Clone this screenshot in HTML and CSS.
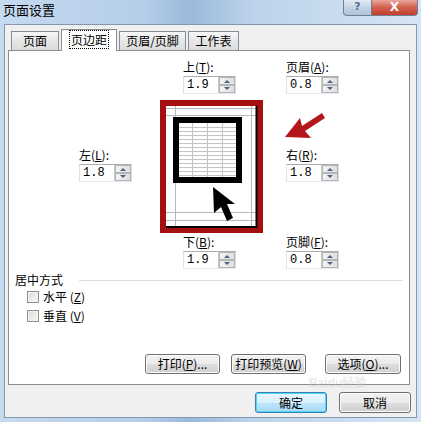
FILE: index.html
```
<!DOCTYPE html>
<html lang="zh-CN">
<head>
  <meta charset="UTF-8">
  <title>页面设置</title>
  <link rel="stylesheet" href="styles.css">
</head>
<body>
  <div class="window">
    <div class="titlebar">
      <span class="title">页面设置</span>
      <div class="caption-buttons">
        <span class="cap-help">?</span>
        <span class="cap-close">X</span>
      </div>
    </div>

    <div class="dialog">
      <div class="tabs">
        <div class="tab tab-page">页面</div>
        <div class="tab tab-margin active"><span class="focus">页边距</span></div>
        <div class="tab tab-header">页眉/页脚</div>
        <div class="tab tab-sheet">工作表</div>
      </div>

      <div class="panel">
        <div class="margins">
          <div></div>
          <div class="field indent">
            <label>上(<u>T</u>):</label>
            <div class="spin"><span class="value">1.9</span><span class="arrows"><i class="up"></i><i class="down"></i></span></div>
          </div>
          <div class="field indent">
            <label>页眉(<u>A</u>):</label>
            <div class="spin"><span class="value">0.8</span><span class="arrows"><i class="up"></i><i class="down"></i></span></div>
          </div>

          <div class="field middle">
            <label>左(<u>L</u>):</label>
            <div class="spin"><span class="value">1.8</span><span class="arrows"><i class="up"></i><i class="down"></i></span></div>
          </div>
          <svg class="preview" width="103" height="133" viewBox="0 0 103 133">
            <rect x="3" y="3" width="97" height="127" fill="#fff" stroke="#a3100f" stroke-width="6"/>
            <g stroke="#b9b9b9" stroke-width="1">
              <line x1="15.5" y1="6" x2="15.5" y2="126"/>
              <line x1="91.5" y1="6" x2="91.5" y2="126"/>
              <line x1="6" y1="8.5" x2="96" y2="8.5"/>
              <line x1="6" y1="15.5" x2="96" y2="15.5"/>
              <line x1="6" y1="112.5" x2="96" y2="112.5"/>
              <line x1="6" y1="120.5" x2="96" y2="120.5"/>
            </g>
            <path d="M96.5 6 V127 H6" fill="none" stroke="#000" stroke-width="2"/>
            <g stroke="#c4c4c4" stroke-width="1">
              <line x1="19" y1="27.5" x2="76" y2="27.5"/>
              <line x1="19" y1="31.5" x2="76" y2="31.5"/>
              <line x1="19" y1="35.5" x2="76" y2="35.5"/>
              <line x1="19" y1="39.5" x2="76" y2="39.5"/>
              <line x1="19" y1="43.5" x2="76" y2="43.5"/>
              <line x1="19" y1="47.5" x2="76" y2="47.5"/>
              <line x1="19" y1="51.5" x2="76" y2="51.5"/>
              <line x1="19" y1="55.5" x2="76" y2="55.5"/>
              <line x1="19" y1="59.5" x2="76" y2="59.5"/>
              <line x1="19" y1="63.5" x2="76" y2="63.5"/>
              <line x1="19" y1="67.5" x2="76" y2="67.5"/>
              <line x1="19" y1="71.5" x2="76" y2="71.5"/>
              <line x1="19" y1="75.5" x2="76" y2="75.5"/>
              <line x1="32.5" y1="23" x2="32.5" y2="80"/>
              <line x1="47.5" y1="23" x2="47.5" y2="80"/>
              <line x1="62.5" y1="23" x2="62.5" y2="80"/>
            </g>
            <rect x="16" y="20" width="63" height="60" fill="none" stroke="#000" stroke-width="6"/>
            <polygon points="53,87 54,113 61,107 67,121 73,118 67,104 75,104" fill="#000"/>
          </svg>
          <div class="field indent middle">
            <label>右(<u>R</u>):</label>
            <div class="spin"><span class="value">1.8</span><span class="arrows"><i class="up"></i><i class="down"></i></span></div>
          </div>

          <div></div>
          <div class="field indent">
            <label>下(<u>B</u>):</label>
            <div class="spin"><span class="value">1.9</span><span class="arrows"><i class="up"></i><i class="down"></i></span></div>
          </div>
          <div class="field indent">
            <label>页脚(<u>F</u>):</label>
            <div class="spin"><span class="value">0.8</span><span class="arrows"><i class="up"></i><i class="down"></i></span></div>
          </div>
        </div>

        <div class="group-title">
          <span>居中方式</span>
          <div class="rule"></div>
        </div>
        <div class="check"><span class="box"></span>水平 (<u>Z</u>)</div>
        <div class="check"><span class="box"></span>垂直 (<u>V</u>)</div>

        <div class="actions">
          <button class="btn">打印(<u>P</u>)...</button>
          <button class="btn">打印预览(<u>W</u>)</button>
          <button class="btn btn-options">选项(<u>O</u>)...</button>
        </div>

        <!-- annotation arrow drawn over the panel -->
        <svg class="red-arrow" width="44" height="30" viewBox="0 0 44 30">
          <polygon points="1,27 16,8 18,16 38,3 41,8 21,21 27,28" fill="#b3171b"/>
        </svg>
        <div class="watermark">Baidu经验</div>
      </div>

      <div class="footer">
        <button class="btn btn-ok">确定</button>
        <button class="btn btn-cancel">取消</button>
      </div>
    </div>
  </div>
</body>
</html>
```

FILE: styles.css
```
body {
  margin: 0;
  font-family: "Noto Sans CJK SC", "Noto Sans", sans-serif;
  font-size: 12px;
  color: #000;
}
.window {
  width: 421px;
  height: 422px;
  display: flex;
  flex-direction: column;
  background: linear-gradient(90deg, #c6daf0 0%, #b5cde8 35%, #9ab9dc 45%, #bcd3ea 60%, #d6e5f5 100%);
  overflow: hidden;
}
.titlebar {
  height: 24px;
  display: flex;
  justify-content: space-between;
  align-items: flex-start;
}
.title {
  font-size: 13px;
  line-height: 18px;
  padding: 1px 0 0 3px;
}
.caption-buttons {
  display: flex;
  margin-right: 3px;
}
.cap-help, .cap-close {
  height: 16px;
  line-height: 14px;
  text-align: center;
  border: 1px solid #6f7f95;
  border-top: none;
  box-sizing: border-box;
  font-family: "DejaVu Sans", sans-serif;
  font-weight: bold;
}
.cap-help {
  width: 29px;
  border-radius: 0 0 0 4px;
  background: linear-gradient(#e4ecf5, #c3d3e5 50%, #b0c4da);
  color: #5b6e86;
  font-size: 11px;
}
.cap-close {
  width: 46px;
  border-left: none;
  border-radius: 0 0 4px 0;
  background: linear-gradient(#e9a79d, #d2604f 50%, #c43e2c);
  color: #fff;
  font-size: 12px;
}
.dialog {
  position: relative;
  height: 394px;
  margin: 0 4px;
  background: #f0f0f0;
  border: 1px solid #8796aa;
  box-sizing: border-box;
  display: flex;
  flex-direction: column;
}
.tabs {
  display: flex;
  align-items: flex-end;
  height: 21px;
  padding: 4px 0 0 6px;
  gap: 2px;
}
.tab {
  height: 19px;
  line-height: 18px;
  text-align: center;
  border: 1px solid #898c95;
  border-bottom: none;
  box-sizing: border-box;
  background: linear-gradient(#f7f7f7, #e6e6e6 50%, #dcdcdc);
}
.tab-page { width: 48px; }
.tab-margin { width: 56px; }
.tab-header { width: 67px; }
.tab-sheet { width: 51px; }
.tab.active {
  height: 22px;
  background: #fff;
  margin-bottom: -1px;
  position: relative;
  z-index: 1;
  line-height: 20px;
}
.focus {
  border: 1px dotted #000;
  padding: 0 1px;
}
.panel {
  position: relative;
  height: 335px;
  margin: 0 6px 0 3px;
  background: #fff;
  border: 1px solid #898c95;
  box-sizing: border-box;
}
.margins {
  display: grid;
  grid-template-columns: 81px 103px auto;
  padding: 9px 0 0 70px;
}
.field label {
  display: block;
  line-height: 14px;
  height: 14px;
}
.field u {
  text-decoration: underline;
}
.indent {
  margin-left: 23px;
}
.middle {
  align-self: center;
}
.spin {
  width: 53px;
  height: 18px;
  margin-top: 2px;
  border: 1px solid #abadb3;
  border-color: #abadb3 #dbdfe6 #e3e9ef #e2e3ea;
  box-sizing: border-box;
  display: flex;
  justify-content: space-between;
}
.value {
  font-family: "Liberation Mono", monospace;
  font-size: 12px;
  line-height: 16px;
  padding-left: 3px;
}
.arrows {
  width: 16px;
  display: flex;
  flex-direction: column;
  border-left: 1px solid #c9c9c9;
  background: linear-gradient(90deg, #f4f4f4, #dedede);
}
.arrows i {
  flex: 1;
  position: relative;
  border: 1px solid #b4b4b4;
}
.arrows i::after {
  content: "";
  position: absolute;
  left: 4px;
  top: 2px;
  border-left: 3px solid transparent;
  border-right: 3px solid transparent;
}
.arrows .up::after {
  border-bottom: 3px solid #4f6285;
}
.arrows .down::after {
  top: 1px;
  border-top: 3px solid #4f6285;
}
.preview {
  display: block;
  margin: 6px 0 2px;
}
.group-title {
  display: flex;
  align-items: center;
  margin: 4px 6px 0 6px;
  line-height: 14px;
}
.group-title .rule {
  flex: 1;
  margin-left: 16px;
  border-top: 1px solid #d5dfe5;
}
.check {
  display: flex;
  align-items: center;
  height: 19px;
  padding-left: 18px;
}
.check u {
  text-decoration: underline;
}
.box {
  width: 12px;
  height: 12px;
  box-sizing: border-box;
  border: 1px solid #8f8f8f;
  background: linear-gradient(135deg, #dcdcdc, #f8f8f8);
  box-shadow: inset 0 0 0 1px #f4f4f4;
  margin-right: 4px;
}
.actions {
  display: flex;
  justify-content: flex-end;
  gap: 11px;
  margin-top: 29px;
  padding-right: 8px;
}
.btn {
  height: 20px;
  width: 75px;
  padding: 0;
  font-family: "Noto Sans CJK SC", "Noto Sans", sans-serif;
  font-size: 12px;
  line-height: 16px;
  color: #000;
  border: 1px solid #707070;
  border-radius: 3px;
  background: linear-gradient(#f2f2f2, #ebebeb 50%, #dddddd 51%, #cfcfcf);
  box-shadow: inset 0 0 0 1px #fcfcfc;
}
.btn u {
  text-decoration: underline;
}
.btn-options {
  width: 76px;
  margin-left: 8px;
}
.red-arrow {
  position: absolute;
  left: 275px;
  top: 59px;
}
.watermark {
  position: absolute;
  left: 300px;
  top: 325px;
  z-index: 2;
  font-family: "Liberation Sans", sans-serif;
  font-size: 12px;
  line-height: 14px;
  font-weight: bold;
  color: rgba(200, 200, 200, 0.4);
  pointer-events: none;
}
.footer {
  display: flex;
  justify-content: flex-end;
  gap: 12px;
  margin-top: 7px;
  padding-right: 5px;
}
.btn-ok, .btn-cancel {
  width: 72px;
  height: 21px;
}
.btn-ok {
  border-color: #3c7fb1;
  box-shadow: inset 0 0 0 1px #48d8fb;
  background: linear-gradient(#eaf6fd, #d9f0fc 50%, #bee6fd 51%, #a7d9f5);
}
```
